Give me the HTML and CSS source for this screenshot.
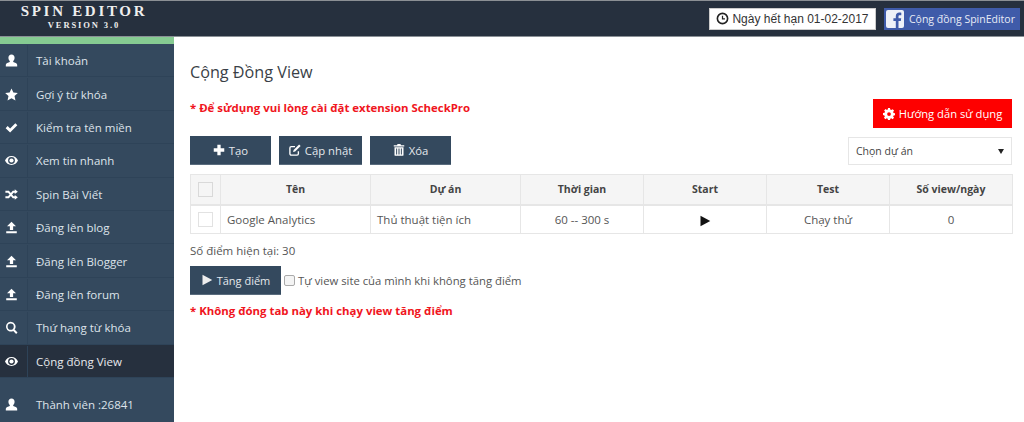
FILE: index.html
```html
<!DOCTYPE html>
<html lang="vi">
<head>
<meta charset="utf-8">
<title>Spin Editor</title>
<link rel="stylesheet" href="styles.css">
</head>
<body>
<svg class="defs" width="0" height="0" aria-hidden="true">
  <symbol id="i-user" viewBox="0 0 16 16"><path d="M8 0.500c2.400 0 3.800 1.700 3.800 4.100 0 1.700-.8 3.200-1.700 4v1.300c1.900.6 4.900 1.300 4.900 3.400V15.500H1v-2.200c0-2.100 3-2.800 4.900-3.400V8.600C5 7.800 4.200 6.300 4.200 4.600 4.200 2.200 5.600.5 8 .5z"/></symbol>
  <symbol id="i-star" viewBox="0 0 16 16"><path d="M8 .5l2.300 5.100 5.500.6-4.100 3.700 1.200 5.400L8 12.500l-4.900 2.800 1.200-5.400L.2 6.200l5.500-.6z"/></symbol>
  <symbol id="i-check" viewBox="0 0 16 16"><path d="M.8 8.800l2.500-2.500 3 3L12.700 2.800 15.200 5.300 6.300 14.200z"/></symbol>
  <symbol id="i-eye" viewBox="0 0 16 16"><path fill-rule="evenodd" d="M8 2.500c3.700 0 6.700 2.400 8 5.500-1.300 3.100-4.300 5.500-8 5.500S1.300 11.100 0 8c1.300-3.100 4.300-5.500 8-5.500zm0 1.300A4.200 4.200 0 0 0 3.800 8 4.200 4.200 0 0 0 12.200 8 4.200 4.200 0 0 0 8 3.800z"/><circle cx="8" cy="8" r="2.600"/></symbol>
  <symbol id="i-shuffle" viewBox="0 0 16 16"><path d="M12 1.500L15.800 4.500 12 7.500V5.700h-1.500L8.700 8l1.800 2.300H12V8.500l3.800 3-3.800 3v-1.800H9.500L7.200 9.700 4.800 12.700H.5v-2.400h3.200L5.700 8 3.700 5.700H.5V3.300h4.300l2.400 3 2.300-3H12z"/></symbol>
  <symbol id="i-upload" viewBox="0 0 16 16"><path d="M8 1l5.500 5.500H10V11H6V6.500H2.500zM1.500 12.500h13V15h-13z"/></symbol>
  <symbol id="i-search" viewBox="0 0 16 16"><path fill-rule="evenodd" d="M7 1a6 6 0 0 1 4.800 9.600l3.600 3.600-1.700 1.700-3.600-3.600A6 6 0 1 1 7 1zm0 2.200a3.800 3.800 0 1 0 0 7.600 3.800 3.800 0 0 0 0-7.600z"/></symbol>
  <symbol id="i-play" viewBox="0 0 16 16"><path d="M2 1L15 8 2 15z"/></symbol>
</svg>

<header class="topbar">
  <div class="brand">
    <div class="brand-name">SPIN EDITOR</div>
    <div class="brand-version">VERSION 3.0</div>
  </div>
  <div class="top-actions">
    <div class="expiry">
      <svg class="clock" viewBox="0 0 16 16"><circle cx="8" cy="8" r="6.300" fill="none" stroke="#222" stroke-width="2"/><path d="M8 4.500V8.500H11" fill="none" stroke="#222" stroke-width="1.500"/></svg>
      <span>Ngày hết hạn 01-02-2017</span>
    </div>
    <div class="fb">
      <span class="fb-logo"><svg viewBox="0 0 18 18"><path fill="#3f5ba9" d="M12.500 18v-7h2.300l.4-2.800h-2.700V6.500c0-.8.300-1.300 1.400-1.300h1.400V2.700c-.3 0-1.100-.1-2-.1-2.100 0-3.500 1.300-3.500 3.600v2H7.400V11h2.400v7z"/></svg></span>
      <span>Cộng đồng SpinEditor</span>
    </div>
  </div>
</header>

<div class="layout">
  <nav class="sidebar">
    <div class="accent"></div>
    <a class="nav-item"><span class="nav-icon"><svg><use href="#i-user"/></svg></span><span class="nav-label">Tài khoản</span></a>
    <a class="nav-item"><span class="nav-icon"><svg><use href="#i-star"/></svg></span><span class="nav-label">Gợi ý từ khóa</span></a>
    <a class="nav-item"><span class="nav-icon"><svg><use href="#i-check"/></svg></span><span class="nav-label">Kiểm tra tên miền</span></a>
    <a class="nav-item"><span class="nav-icon"><svg><use href="#i-eye"/></svg></span><span class="nav-label">Xem tin nhanh</span></a>
    <a class="nav-item"><span class="nav-icon"><svg><use href="#i-shuffle"/></svg></span><span class="nav-label">Spin Bài Viết</span></a>
    <a class="nav-item"><span class="nav-icon"><svg><use href="#i-upload"/></svg></span><span class="nav-label">Đăng lên blog</span></a>
    <a class="nav-item"><span class="nav-icon"><svg><use href="#i-upload"/></svg></span><span class="nav-label">Đăng lên Blogger</span></a>
    <a class="nav-item"><span class="nav-icon"><svg><use href="#i-upload"/></svg></span><span class="nav-label">Đăng lên forum</span></a>
    <a class="nav-item"><span class="nav-icon"><svg><use href="#i-search"/></svg></span><span class="nav-label">Thứ hạng từ khóa</span></a>
    <a class="nav-item active"><span class="nav-icon"><svg><use href="#i-eye"/></svg></span><span class="nav-label">Cộng đồng View</span></a>
    <div class="members"><span class="nav-icon plain"><svg><use href="#i-user"/></svg></span><span class="nav-label">Thành viên :26841</span></div>
  </nav>

  <main class="content">
    <h1 class="title">Cộng Đồng View</h1>
    <div class="notice-row">
      <p class="warn">* Để sửdụng vui lòng cài đặt extension ScheckPro</p>
      <a class="btn-guide">
        <svg viewBox="0 0 16 16"><path fill="#fff" fill-rule="evenodd" d="M6.700 0h2.600l.4 2.100 1.300.6 1.800-1.200 1.900 1.900-1.200 1.800.6 1.300 2.100.4v2.600l-2.100.4-.6 1.300 1.200 1.800-1.900 1.900-1.800-1.200-1.300.6-.4 2.100H6.700l-.4-2.100-1.300-.6-1.800 1.200-1.900-1.900 1.200-1.800-.6-1.300L0 9.300V6.700l2.100-.4.6-1.300-1.200-1.800 1.900-1.900L5.200 2.500 6.300 2.100zM8 5.500a2.500 2.500 0 1 0 0 5 2.500 2.500 0 0 0 0-5z"/></svg>
        Hướng dẫn sử dụng
      </a>
    </div>
    <div class="toolbar">
      <div class="toolbar-buttons">
        <a class="btn btn-tao"><svg viewBox="0 0 16 16"><path fill="#fff" d="M5.800 1h4.400v4.800H15v4.400h-4.800V15H5.800v-4.800H1V5.800h4.800z"/></svg>Tạo</a>
        <a class="btn btn-update"><svg viewBox="0 0 16 16"><path fill="none" stroke="#fff" stroke-width="1.800" d="M12.500 9.500V13a1.800 1.800 0 0 1-1.800 1.800H3A1.800 1.800 0 0 1 1.200 13V5.300A1.800 1.800 0 0 1 3 3.500h5"/><path fill="#fff" d="M13.500.8l2 2-7.300 7.300-2.800.7.800-2.700z"/></svg>Cập nhật</a>
        <a class="btn btn-del"><svg viewBox="0 0 16 16"><path fill="#fff" d="M6 0h4l.6 1.500H15V3.200H1V1.500h4.400zM2 4.200h12v10.300a1.300 1.300 0 0 1-1.300 1.300H3.300A1.300 1.300 0 0 1 2 14.500zm2.200 1.800v8h1.300V6zm3.100 0v8h1.400V6zm3.200 0v8h1.300V6z"/></svg>Xóa</a>
      </div>
      <div class="select-box"><span>Chọn dự án</span><span class="caret"></span></div>
    </div>

    <table class="grid">
      <colgroup>
        <col class="c-check"><col class="c-wide"><col class="c-wide"><col class="c-mid"><col class="c-mid"><col class="c-mid"><col class="c-mid">
      </colgroup>
      <thead>
        <tr>
          <th><span class="cb cb-head"></span></th>
          <th>Tên</th><th>Dự án</th><th>Thời gian</th><th>Start</th><th>Test</th><th>Số view/ngày</th>
        </tr>
      </thead>
      <tbody>
        <tr>
          <td class="center"><span class="cb"></span></td>
          <td>Google Analytics</td>
          <td>Thủ thuật tiện ích</td>
          <td class="center">60 -- 300 s</td>
          <td class="center"><svg class="play" viewBox="0 0 16 16"><use href="#i-play"/></svg></td>
          <td class="center">Chạy thử</td>
          <td class="center">0</td>
        </tr>
      </tbody>
    </table>

    <p class="points">Số điểm hiện tại: 30</p>
    <div class="boost-row">
      <a class="btn btn-boost"><svg viewBox="0 0 16 16"><use href="#i-play"/></svg>Tăng điểm</a>
      <span class="native-cb"></span>
      <span class="boost-label">Tự view site của mình khi không tăng điểm</span>
    </div>
    <p class="warn warn-bottom">* Không đóng tab này khi chạy view tăng điểm</p>
  </main>
</div>
</body>
</html>
```
FILE: styles.css
```css
* { box-sizing: border-box; }
html, body { margin: 0; padding: 0; height: 422px; overflow: hidden; }
body { font-family: "Open Sans", "Liberation Sans", sans-serif; font-size: 12px; color: #444; background: #fff; }
.defs { display: block; height: 0; }

.topbar { height: 37px; background: #26303e; border-top: 1px solid #8b8f94; border-bottom: 1px solid #8a9096; display: flex; justify-content: space-between; align-items: center; padding-right: 4px; }
.brand { width: 168px; text-align: center; color: #eee; font-family: "Liberation Serif", serif; font-weight: bold; }
.brand-name { font-size: 15px; letter-spacing: 2.700px; line-height: 16px; margin-top: -3px; }
.brand-version { font-size: 8.500px; letter-spacing: 1.900px; line-height: 12px; }
.top-actions { display: flex; gap: 8px; }
.expiry { width: 167px; height: 22px; background: #fff; border: 1px solid #ccc; display: flex; align-items: center; justify-content: center; gap: 3px; font-family: "Liberation Sans", sans-serif; font-size: 12px; color: #333; white-space: nowrap; }
.clock { width: 13px; height: 13px; }
.fb { width: 136px; height: 22px; background: #3f5ba9; color: #e8ecf6; display: flex; align-items: center; gap: 5px; padding-left: 2px; font-size: 10.500px; white-space: nowrap; }
.fb-logo { width: 18px; height: 18px; background: #eef1f8; border-radius: 2px; display: block; overflow: hidden; }
.fb-logo svg { display: block; width: 18px; height: 18px; }

.layout { display: flex; height: 385px; }
.sidebar { width: 174px; flex: none; background: #34495e; }
.accent { height: 7px; background: #86cb92; }
.nav-item { height: 33.400px; display: flex; align-items: center; border-bottom: 1px solid #2e4358; color: #dde3ea; font-size: 11.500px; padding-top: 1px; }
.nav-item.active { background: #26303e; color: #e6e9ed; }
.nav-icon { width: 28px; height: 100%; flex: none; display: flex; align-items: center; justify-content: center; border-right: 1px solid #2e4358; padding-right: 5px; }
.nav-icon svg { width: 13px; height: 13px; fill: #fff; }
.nav-icon.plain { border-right: 0; }
.nav-label { padding-left: 8px; white-space: nowrap; }
.members { height: 33px; margin-top: 10px; display: flex; align-items: center; color: #dde3ea; font-size: 11.500px; }

.content { flex: 1; padding: 24px 12px 0 16px; min-width: 0; }
.title { margin: 0; font-size: 16.200px; font-weight: 400; line-height: 22px; color: #3a3f47; }
.notice-row { display: flex; justify-content: space-between; align-items: flex-start; margin-top: 16px; height: 37px; }
.warn { margin: 0; font-size: 11.400px; font-weight: 700; color: #f01521; line-height: 17px; }
.btn-guide { width: 139px; height: 29px; background: #fe0000; color: #fff; display: flex; align-items: center; justify-content: center; gap: 4px; font-size: 11.200px; white-space: nowrap; }
.btn-guide svg { width: 12px; height: 12px; }
.toolbar { display: flex; justify-content: space-between; align-items: flex-start; }
.toolbar-buttons { display: flex; gap: 8px; }
.btn { height: 29px; background: #34495e; color: #e4e8ec; display: flex; align-items: center; justify-content: center; gap: 4px; font-size: 11.300px; white-space: nowrap; border: 1px solid #5a6c7e; border-width: 0 0 1px; }
.btn svg { width: 12px; height: 12px; fill: #eee; }
.btn-tao { width: 81px; }
.btn-update { width: 83px; }
.btn-del { width: 81px; }
.select-box { width: 164px; height: 28px; margin-top: 1px; border: 1px solid #e6e6e6; display: flex; justify-content: space-between; align-items: center; padding: 0 7px; font-size: 10.500px; color: #444; }
.caret { width: 0; height: 0; border-left: 3px solid transparent; border-right: 3px solid transparent; border-top: 5px solid #222; }

.grid { width: 822px; margin-top: 9px; border-collapse: collapse; table-layout: fixed; border: 1px solid #e6e6e6; font-size: 11.500px; }
.c-check { width: 30px; }
.c-wide { width: 150px; }
.c-mid { width: 123px; }
.grid th { height: 30px; background: #f5f5f5; border: 1px solid #e6e6e6; border-bottom-width: 2px; font-size: 10.500px; font-weight: 700; text-align: center; color: #444; padding: 0; }
.grid td { height: 29px; border: 1px solid #e6e6e6; padding: 0 6px; color: #555; white-space: nowrap; }
.grid td.center { text-align: center; padding: 0; }
.cb { display: inline-block; width: 15px; height: 15px; background: #fff; border: 1px solid #e2e2e2; vertical-align: middle; }
.cb-head { background: #f5f5f5; border-color: #d9d9d9; }
.play { width: 12px; height: 12px; fill: #111; vertical-align: middle; }

.points { margin: 8px 0 0; line-height: 17px; font-size: 11.500px; color: #555; }
.boost-row { display: flex; align-items: center; margin-top: 7px; }
.btn-boost { width: 91px; margin-right: 3px; font-size: 11px; }
.native-cb { width: 11px; height: 11px; border: 1px solid #aaa; border-radius: 2px; background: #f4f4f4; margin-right: 3px; }
.boost-label { font-size: 11.300px; color: #555; white-space: nowrap; }
.warn-bottom { margin-top: 7px; }
```
